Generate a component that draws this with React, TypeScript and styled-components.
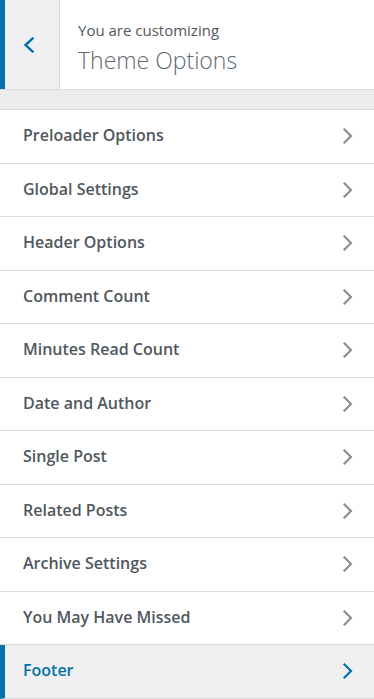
import React from "react";
import styled, { createGlobalStyle } from "styled-components";

const Global = createGlobalStyle`
  html, body { margin: 0; padding: 0; background: #fff; }
  body { font-family: "Open Sans", "Noto Sans", sans-serif; -webkit-font-smoothing: antialiased; }
  * { box-sizing: border-box; }
`;

const Panel = styled.div`
  width: 374px;
  height: 699px;
  background: #fff;
  overflow: hidden;
  display: flex;
  flex-direction: column;
`;

const Header = styled.div`
  display: flex;
  height: 90px;
  border-bottom: 1px solid #dcdcde;
  background: #fff;
`;

const BackButton = styled.button`
  width: 60px;
  flex: none;
  border: 0;
  border-left: 5px solid #0073aa;
  border-right: 1px solid #dcdcde;
  background: #f0f0f1;
  display: flex;
  align-items: center;
  justify-content: center;
  padding: 0 6px 0 0;
  margin: 0;
  cursor: pointer;
`;

const TitleBlock = styled.div`
  display: flex;
  flex-direction: column;
  justify-content: flex-start;
  padding: 19px 0 0 18px;
`;

const Sub = styled.span`
  font-size: 15px;
  line-height: 22px;
  color: #50575e;
`;

const Title = styled.span`
  margin-top: 3px;
  font-size: 23px;
  line-height: 32px;
  font-weight: 300;
  color: #646970;
`;

const Spacer = styled.div`
  height: 20px;
  background: #ececec;
  border-bottom: 1px solid #dcdcde;
`;

const Row = styled.div<{ $active?: boolean }>`
  height: 53.5px;
  flex: none;
  display: flex;
  align-items: center;
  justify-content: space-between;
  padding: 0 20px 0 ${(p) => (p.$active ? "18px" : "23px")};
  border-bottom: 1px solid #dcdcde;
  border-left: ${(p) => (p.$active ? "5px solid #0073aa" : "0")};
  background: ${(p) => (p.$active ? "#f0f0f1" : "#fff")};
  color: ${(p) => (p.$active ? "#0073aa" : "#50575e")};
  font-size: 16px;
  font-weight: 600;
`;

const Label = styled.span`
  line-height: 22px;
  padding-bottom: 2px;
`;

const Chevron = ({ color, dir = "right" }: { color: string; dir?: "left" | "right" }) => (
  <svg width="12" height="16" viewBox="0 0 12 16" fill="none">
    {dir === "right" ? (
      <path d="M2.5 1.5 L9 8 L2.5 14.5" stroke={color} strokeWidth="2.2" strokeLinecap="square" />
    ) : (
      <path d="M9.5 1.5 L2.5 8 L9.5 14.5" stroke={color} strokeWidth="2.4" strokeLinecap="square" />
    )}
  </svg>
);

const items = [
  "Preloader Options",
  "Global Settings",
  "Header Options",
  "Comment Count",
  "Minutes Read Count",
  "Date and Author",
  "Single Post",
  "Related Posts",
  "Archive Settings",
  "You May Have Missed",
  "Footer",
];

export default function App() {
  return (
    <>
      <Global />
      <Panel>
        <Header>
          <BackButton aria-label="Back">
            <Chevron color="#0073aa" dir="left" />
          </BackButton>
          <TitleBlock>
            <Sub>You are customizing</Sub>
            <Title>Theme Options</Title>
          </TitleBlock>
        </Header>
        <Spacer />
        {items.map((it) => {
          const active = it === "Footer";
          return (
            <Row key={it} $active={active}>
              <Label>{it}</Label>
              <Chevron color={active ? "#0073aa" : "#8c8f94"} />
            </Row>
          );
        })}
      </Panel>
    </>
  );
}
